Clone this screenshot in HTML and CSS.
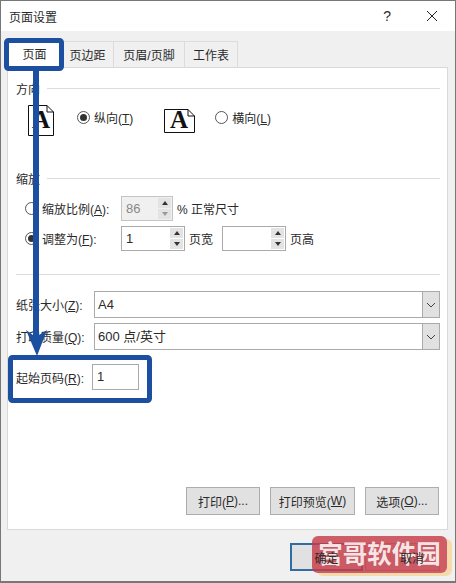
FILE: index.html
```html
<!DOCTYPE html>
<html lang="zh-CN">
<head>
    <meta charset="UTF-8">
    <title>页面设置</title>
    <link rel="stylesheet" href="styles.css">
</head>
<body>
    <div class="dialog">
        <div class="title-bar">
            <span class="title">页面设置</span>
            <span class="help">?</span>
            <svg class="close" width="12" height="12" viewBox="0 0 12 12"><path d="M1 1L11 11M11 1L1 11" stroke="#222" stroke-width="1" fill="none"/></svg>
        </div>

        <div class="dialog-body">
            <div class="tabs">
                <div class="tab active">页面</div>
                <div class="tab margins">页边距</div>
                <div class="tab header-footer">页眉/页脚</div>
                <div class="tab sheet">工作表</div>
            </div>

            <div class="panel">
                <div class="group-title"><span>方向</span></div>
                <div class="orientation">
                    <svg class="page-icon portrait" width="26" height="31" viewBox="0 0 26 31">
                        <path d="M.5.5H19L25.5 7V30.500H.5Z M19 .5V7H25.5" fill="#fff" stroke="#111"/>
                        <text x="13" y="23" text-anchor="middle" class="icon-letter">A</text>
                    </svg>
                    <span class="radio checked"></span>
                    <span class="radio-label">纵向(<u>T</u>)</span>
                    <svg class="page-icon landscape" width="31" height="24" viewBox="0 0 31 24">
                        <path d="M.5.5H24L30.500 7V23.500H.5Z M24 .5V7H30.500" fill="#fff" stroke="#111"/>
                        <text x="15" y="19" text-anchor="middle" class="icon-letter">A</text>
                    </svg>
                    <span class="radio"></span>
                    <span class="radio-label">横向(<u>L</u>)</span>
                </div>

                <div class="group-title scale-title"><span>缩放</span></div>
                <div class="scale-row first">
                    <span class="radio"></span>
                    <span class="scale-label">缩放比例(<u>A</u>):</span>
                    <div class="spin disabled">
                        <span class="spin-value">86</span>
                        <div class="spin-btns"><i class="up"></i><i class="down"></i></div>
                    </div>
                    <span class="unit">% 正常尺寸</span>
                </div>
                <div class="scale-row">
                    <span class="radio checked"></span>
                    <span class="scale-label">调整为(<u>F</u>):</span>
                    <div class="spin wide">
                        <span class="spin-value">1</span>
                        <div class="spin-btns"><i class="up"></i><i class="down"></i></div>
                    </div>
                    <span class="unit">页宽</span>
                    <div class="spin wide second">
                        <span class="spin-value"></span>
                        <div class="spin-btns"><i class="up"></i><i class="down"></i></div>
                    </div>
                    <span class="unit">页高</span>
                </div>

                <div class="divider"></div>

                <div class="field-row paper">
                    <span class="field-label">纸张大小(<u>Z</u>):</span>
                    <div class="select">
                        <span class="select-value">A4</span>
                        <span class="select-arrow"><svg width="10" height="6" viewBox="0 0 10 6"><path d="M1 1L5 5L9 1" stroke="#444" fill="none"/></svg></span>
                    </div>
                </div>
                <div class="field-row quality">
                    <span class="field-label">打印质量(<u>Q</u>):</span>
                    <div class="select">
                        <span class="select-value">600 点/英寸</span>
                        <span class="select-arrow"><svg width="10" height="6" viewBox="0 0 10 6"><path d="M1 1L5 5L9 1" stroke="#444" fill="none"/></svg></span>
                    </div>
                </div>
                <div class="field-row start-page">
                    <span class="field-label">起始页码(<u>R</u>):</span>
                    <div class="text-input">1</div>
                </div>

                <div class="panel-buttons">
                    <div class="btn print">打印(<u>P</u>)...</div>
                    <div class="btn preview">打印预览(<u>W</u>)</div>
                    <div class="btn options">选项(<u>O</u>)...</div>
                </div>
            </div>

            <div class="footer">
                <div class="btn ok"><span class="btn-text">确定</span></div>
                <div class="btn cancel"><span class="btn-text">取消</span></div>
            </div>
        </div>

        <!-- blue annotation drawn over the dialog -->
        <svg class="annotation" width="456" height="583" viewBox="0 0 456 583">
            <rect x="6.500" y="40.500" width="55" height="28" rx="2" fill="none" stroke="#1c4f9f" stroke-width="5"/>
            <rect x="10.500" y="357.500" width="139" height="43" rx="2" fill="none" stroke="#1c4f9f" stroke-width="5"/>
            <path d="M33 70H39V335L47 330L37 356L26 330L33 335Z" fill="#1c4f9f"/>
        </svg>

        <div class="watermark">宫哥软件园</div>
    </div>
</body>
</html>
```

FILE: styles.css
```css
* {
    margin: 0;
    padding: 0;
    box-sizing: border-box;
}

body {
    width: 456px;
    height: 583px;
    overflow: hidden;
    font-family: "Liberation Sans", "Noto Sans CJK SC", sans-serif;
    font-size: 12px;
    color: #2a2a2a;
    background-color: #fff;
}

u {
    text-decoration: underline;
}

.dialog {
    position: relative;
    width: 456px;
    height: 583px;
    display: flex;
    flex-direction: column;
    border: 1px solid #777;
    border-bottom-width: 2px;
    background-color: #f0f0f0;
}

.title-bar {
    height: 30px;
    flex-shrink: 0;
    display: flex;
    align-items: center;
    padding: 0 17px 0 8px;
    background-color: #fff;
}

.title {
    flex: 1;
}

.help {
    margin-right: 35px;
    font-size: 14px;
}

.dialog-body {
    flex: 1;
    display: flex;
    flex-direction: column;
    padding: 10px 7px 0 6px;
}

.tabs {
    display: flex;
    height: 26px;
    flex-shrink: 0;
}

.tab {
    height: 26px;
    display: flex;
    align-items: center;
    justify-content: center;
    border: 1px solid #dcdcdc;
    border-left: none;
    border-bottom: none;
    background-color: #f0f0f0;
}

.tab.active {
    width: 55px;
    height: 27px;
    margin-top: -1px;
    background-color: #fff;
    border: none;
}

.margins {
    width: 52px;
}

.header-footer {
    width: 71px;
}

.sheet {
    width: 53px;
}

.panel {
    height: 463px;
    flex-shrink: 0;
    display: flex;
    flex-direction: column;
    padding: 0 7px 0 8px;
    background-color: #fff;
    border: 1px solid #d9d9d9;
}

.group-title {
    display: flex;
    align-items: center;
    height: 18px;
    margin-top: 11px;
    gap: 7px;
}

.group-title:after {
    content: '';
    flex: 1;
    height: 1px;
    background-color: #dcdcdc;
}

.orientation {
    display: flex;
    align-items: center;
    height: 31px;
    margin-top: 8px;
    padding-left: 12px;
}

.page-icon {
    flex-shrink: 0;
    overflow: visible;
}

.icon-letter {
    font-family: "Liberation Serif", serif;
    font-weight: bold;
    font-size: 25px;
    fill: #111;
}

.radio {
    width: 13px;
    height: 13px;
    flex-shrink: 0;
    border: 1px solid #555;
    border-radius: 50%;
    background-color: #fff;
    display: flex;
    align-items: center;
    justify-content: center;
}

.radio.checked:before {
    content: '';
    width: 7px;
    height: 7px;
    border-radius: 50%;
    background-color: #333;
}

.orientation .radio,
.radio-label {
    margin-bottom: 6px;
}

.portrait + .radio {
    margin-left: 23px;
}

.radio-label {
    margin-left: 4px;
    white-space: nowrap;
}

.landscape {
    margin-left: 31px;
}

.landscape + .radio {
    margin-left: 20px;
}

.scale-title {
    margin-top: 33px;
}

.scale-row {
    display: flex;
    align-items: center;
    height: 25px;
    margin-top: 5px;
    padding-left: 9px;
}

.scale-row.first {
    margin-top: 9px;
}

.scale-label {
    width: 83px;
    padding-left: 4px;
}

.spin {
    width: 52px;
    height: 25px;
    display: flex;
    border: 1px solid #aaa;
    background-color: #fff;
}

.spin.wide {
    width: 64px;
}

.spin.second {
    margin-left: 9px;
}

.spin.disabled {
    background-color: #f0f0f0;
    border-color: #c4c4c4;
    color: #888;
}

.spin-value {
    flex: 1;
    padding-left: 4px;
    line-height: 23px;
    font-size: 13px;
}

.spin-btns {
    width: 15px;
    display: flex;
    flex-direction: column;
    gap: 1px;
    padding: 1px;
}

.spin-btns i {
    flex: 1;
    background-color: #e3e3e3;
    display: flex;
    align-items: center;
    justify-content: center;
}

.spin-btns .up:before,
.spin-btns .down:before {
    content: '';
    border-left: 3px solid transparent;
    border-right: 3px solid transparent;
}

.spin-btns .up:before {
    border-bottom: 4px solid #333;
}

.spin-btns .down:before {
    border-top: 4px solid #333;
}

.spin.disabled .spin-btns .down:before {
    border-top-color: #999;
}

.unit {
    margin-left: 4px;
}

.divider {
    height: 1px;
    margin-top: 23px;
    background-color: #dcdcdc;
}

.field-row {
    display: flex;
    align-items: center;
}

.paper {
    margin-top: 16px;
}

.quality {
    margin-top: 5px;
}

.start-page {
    margin-top: 14px;
}

.field-label {
    width: 78px;
    flex-shrink: 0;
}

.select {
    flex: 1;
    height: 27px;
    display: flex;
    border: 1px solid #aaa;
    background-color: #fff;
}

.select-value {
    flex: 1;
    padding-left: 3px;
    line-height: 25px;
    font-size: 13px;
}

.select-arrow {
    width: 17px;
    display: flex;
    align-items: center;
    justify-content: center;
    background-color: #e1e1e1;
    border-left: 1px solid #aaa;
}

.text-input {
    width: 47px;
    height: 26px;
    margin-left: -2px;
    padding-left: 4px;
    line-height: 24px;
    font-size: 13px;
    border: 1px solid #aaa;
}

.panel-buttons {
    display: flex;
    margin-top: 97px;
    padding-left: 170px;
}

.btn {
    height: 28px;
    display: flex;
    align-items: center;
    justify-content: center;
    background-color: #e1e1e1;
    border: 1px solid #adadad;
}

.print {
    width: 74px;
}

.preview {
    width: 85px;
    margin-left: 10px;
}

.options {
    width: 74px;
    margin-left: 10px;
}

.footer {
    display: flex;
    justify-content: flex-end;
    gap: 2px;
    padding: 13px 8px 0 0;
}

.ok {
    width: 73px;
    border: 2px solid #2f6ea5;
}

.cancel {
    width: 75px;
    justify-content: flex-start;
    padding-left: 34px;
}

.btn-text {
    position: relative;
    z-index: 2;
}

.annotation {
    position: absolute;
    left: -1px;
    top: -1px;
    pointer-events: none;
}

.watermark {
    position: absolute;
    z-index: 1;
    left: 311px;
    top: 535px;
    width: 135px;
    height: 37px;
    border-radius: 6px;
    background-color: rgba(198, 60, 72, 0.82);
    box-shadow: 5px 3px 0 rgba(248, 210, 140, 0.7);
    color: rgba(255, 255, 255, 0.85);
    font-size: 24.500px;
    font-weight: bold;
    line-height: 37px;
    text-align: center;
    white-space: nowrap;
}
```
